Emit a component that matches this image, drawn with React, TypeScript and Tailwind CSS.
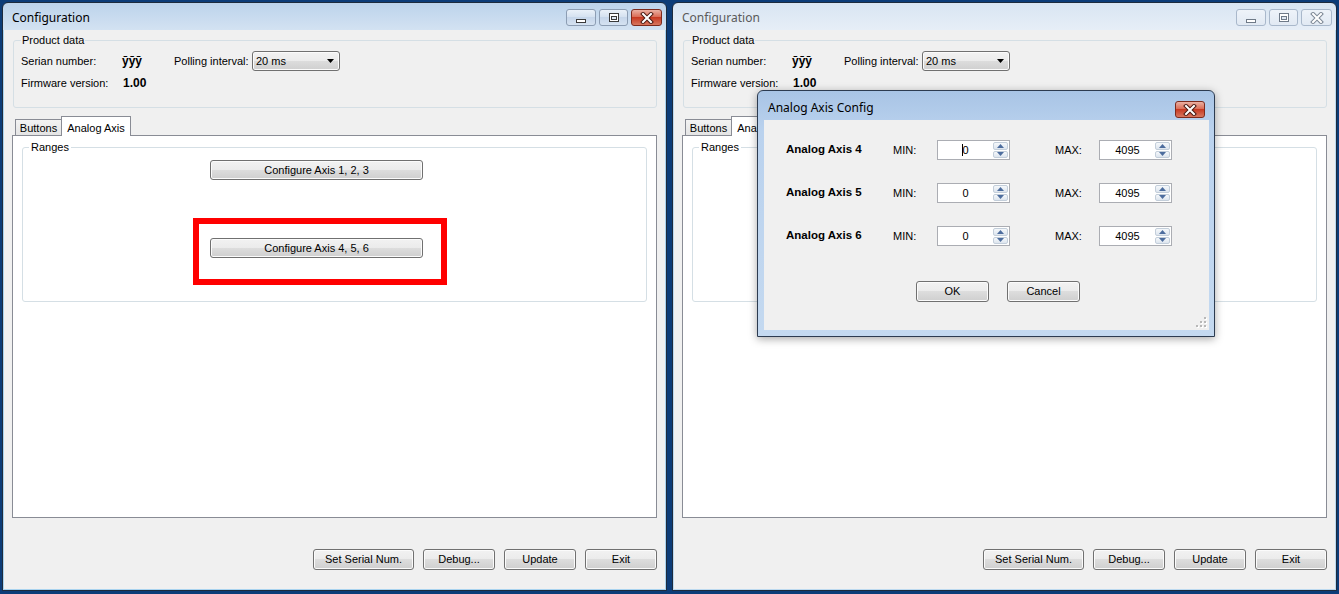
import React from 'react';

const sans = "font-['Liberation_Sans',Arial,sans-serif]";
const btnBg =
  'bg-[linear-gradient(to_bottom,#f2f2f2_0%,#ebebeb_50%,#dddddd_50%,#cfcfcf_100%)] shadow-[inset_0_0_0_1px_#fbfbfb]';

function WinButton({ label, className }: { label: string; className: string }) {
  return (
    <button
      className={`flex shrink-0 items-center justify-center rounded-[3px] border border-[#707070] text-[11px] leading-none text-black ${btnBg} ${className}`}
    >
      {label}
    </button>
  );
}

function CaptionButton({ kind, active, width }: { kind: 'min' | 'max' | 'close'; active: boolean; width: string }) {
  const stroke = active ? '#3a3a3a' : '#6f7a88';
  let bg = 'border-[#8c9db3] bg-[linear-gradient(to_bottom,#eaf1f9,#d3e0ef_50%,#c6d6ea_50%,#d5e2f1)]';
  if (!active) bg = 'border-[#a9b8cb] bg-[linear-gradient(to_bottom,#eef3f9,#e1e9f3)]';
  if (kind === 'close' && active)
    bg = 'border-[#7d2a1c] bg-[linear-gradient(to_bottom,#eab0a2,#d9664f_50%,#c73a22_50%,#d8775f)]';
  return (
    <div className={`flex h-[17px] items-center justify-center rounded-[3px] border ${bg} ${width}`}>
      {kind === 'min' && (
        <svg width="12" height="12" viewBox="0 0 12 12">
          <rect x="1.5" y="7.5" width="9" height="3" fill="#fff" stroke={stroke} />
        </svg>
      )}
      {kind === 'max' && (
        <svg width="12" height="12" viewBox="0 0 12 12">
          <rect x="1.5" y="1.5" width="9" height="8" fill="#fff" stroke={stroke} />
          <rect x="3.5" y="4.5" width="5" height="3" fill="#dfe8f3" stroke={stroke} />
        </svg>
      )}
      {kind === 'close' && (
        <svg width="14" height="12" viewBox="0 0 14 12">
          <path d="M3 2l8 8M11 2l-8 8" stroke={active ? '#4a1a12' : '#7d8896'} strokeWidth="4" strokeLinecap="square" />
          <path d="M3 2l8 8M11 2l-8 8" stroke="#fff" strokeWidth="2" strokeLinecap="square" />
        </svg>
      )}
    </div>
  );
}

function ComboBox() {
  return (
    <div
      className={`flex h-[20px] w-[88px] items-center justify-between rounded-[3px] border border-[#707070] pl-[3px] pr-[5px] text-[11px] ${btnBg}`}
    >
      <span>20 ms</span>
      <svg width="7" height="4" viewBox="0 0 7 4">
        <path d="M0 0h7L3.5 4z" fill="#000" />
      </svg>
    </div>
  );
}

function SpinArrow({ up }: { up?: boolean }) {
  return (
    <div className="flex flex-1 items-center justify-center rounded-[2px] border border-[#c3ceda] bg-[linear-gradient(to_bottom,#f5f8fb,#dde5ee)]">
      <svg width="7" height="4" viewBox="0 0 7 4">
        <path d={up ? 'M0 4h7L3.5 0z' : 'M0 0h7L3.5 4z'} fill="#4d6d9e" />
      </svg>
    </div>
  );
}

function SpinBox({ value, caret }: { value: string; caret?: boolean }) {
  return (
    <div className="flex h-[20px] w-[73px] shrink-0 border border-[#abadb3] bg-white">
      <div className="flex flex-1 items-center justify-center text-[11px]">
        {caret && <span className="mr-[-1px] h-[12px] w-px bg-black" />}
        <span>{value}</span>
      </div>
      <div className="flex w-[16px] flex-col gap-px py-px pr-px">
        <SpinArrow up />
        <SpinArrow />
      </div>
    </div>
  );
}

function AxisRow({ n, caret }: { n: number; caret?: boolean }) {
  return (
    <div className="flex h-[20px] items-center pl-[22px] text-[11px]">
      <span className="w-[107px] text-[11.5px] font-bold">Analog Axis {n}</span>
      <span className="w-[44px]">MIN:</span>
      <SpinBox value="0" caret={caret} />
      <span className="ml-[45px] w-[44px]">MAX:</span>
      <SpinBox value="4095" />
    </div>
  );
}

function AxisDialog() {
  return (
    <div
      className={`absolute left-[84px] top-[87px] z-20 flex h-[247px] w-[458px] flex-col rounded-t-[6px] border border-[#2c3b50] bg-[linear-gradient(to_bottom,#a8c4e5,#bad2ee_40px,#c4d9f0)] pb-[6px] pl-[6px] pr-[5px] shadow-[0_2px_8px_rgba(0,0,0,0.35)] ${sans}`}
    >
      <div className="flex h-[29px] shrink-0 items-start justify-between">
        <span className="pl-[4px] pt-[9px] font-['Noto_Sans',sans-serif] text-[12px] leading-[16px] text-black">
          Analog Axis Config
        </span>
        <div className="mr-[4px] mt-[10px]">
          <CaptionButton kind="close" active width="w-[30px]" />
        </div>
      </div>
      <div className="relative flex flex-1 flex-col bg-[#f0f0f0] pt-[20px] text-black">
        <div className="flex flex-col gap-[23px]">
          <AxisRow n={4} caret />
          <AxisRow n={5} />
          <AxisRow n={6} />
        </div>
        <div className="mt-[35px] flex gap-[18px] pl-[152px]">
          <WinButton label="OK" className="h-[21px] w-[73px]" />
          <WinButton label="Cancel" className="h-[21px] w-[73px]" />
        </div>
        <svg className="absolute bottom-[2px] right-[2px]" width="11" height="11" viewBox="0 0 11 11">
          {[
            [8, 0],
            [8, 4],
            [4, 4],
            [8, 8],
            [4, 8],
            [0, 8],
          ].map(([x, y]) => (
            <g key={`${x}-${y}`}>
              <rect x={x + 1} y={y + 1} width="2" height="2" fill="#fff" />
              <rect x={x} y={y} width="2" height="2" fill="#b8b8b8" />
            </g>
          ))}
        </svg>
      </div>
    </div>
  );
}

function ConfigWindow({ active, highlight, children }: { active: boolean; highlight?: boolean; children?: React.ReactNode }) {
  const frame = active
    ? 'bg-[linear-gradient(to_bottom,#bcd3eb,#d3e2f2_27px,#a9d3ef_27px,#a9d3ef)]'
    : 'bg-[linear-gradient(to_bottom,#d9e5f2,#e6eef7_27px,#bcd9ef_27px,#bcd9ef)]';
  return (
    <div
      className={`relative flex h-[589px] w-[665px] shrink-0 flex-col rounded-t-[6px] border border-[#1d2b3d] px-px pb-px ${frame} ${sans}`}
    >
      <div className="flex h-[27px] shrink-0 items-start justify-between">
        <span
          className={`pl-[8px] pt-[7px] font-['Noto_Sans',sans-serif] text-[12px] leading-[16px] ${active ? 'text-black' : 'text-[#5a5a5a]'}`}
        >
          Configuration
        </span>
        <div className="mr-[3px] mt-[6px] flex gap-[3px]">
          <CaptionButton kind="min" active={active} width="w-[30px]" />
          <CaptionButton kind="max" active={active} width="w-[29px]" />
          <CaptionButton kind="close" active={active} width="w-[31px]" />
        </div>
      </div>

      <div className="flex flex-1 flex-col bg-[#f0f0f0] text-[11px] text-black">
        <fieldset className="ml-[9px] mr-[8px] mt-[4px] h-[74px] rounded-[3px] border border-[#d5dfe5]">
          <legend className="ml-[7px] px-[1px] text-[11px] leading-[13px]">Product data</legend>
          <div className="flex flex-col pl-[7px] pt-[4px]">
            <div className="flex h-[20px] items-center">
              <span className="w-[101px]">Serian number:</span>
              <span className="w-[52px] text-[12px] font-bold">ȳȳȳ</span>
              <span className="w-[78px]">Polling interval:</span>
              <ComboBox />
            </div>
            <div className="mt-[5px] flex h-[14px] items-center">
              <span className="w-[102px]">Firmware version:</span>
              <span className="text-[12px] font-bold">1.00</span>
            </div>
          </div>
        </fieldset>

        <div className="ml-[11px] mt-[8px] flex h-[19px] items-end">
          <div className="flex h-[16px] w-[47px] items-center justify-center border border-b-0 border-[#898c95] bg-[linear-gradient(to_bottom,#f3f3f3,#e4e4e4)] pt-px">
            Buttons
          </div>
          <div className="relative z-10 -mb-px -ml-px flex h-[20px] w-[70px] items-start justify-center border border-b-0 border-[#898c95] bg-white pt-[3px]">
            Analog Axis
          </div>
        </div>
        <div className="relative ml-[8px] mr-[8px] h-[383px] border border-[#898c95] bg-white">
          <fieldset className="ml-[9px] mr-[9px] mt-[5px] h-[161px] rounded-[3px] border border-[#d5dfe5]">
            <legend className="ml-[6px] px-[2px] text-[11px] leading-[13px]">Ranges</legend>
            <div className="flex flex-col pl-[187px] pt-[6px]">
              <WinButton label="Configure Axis 1, 2, 3" className="h-[20px] w-[213px]" />
              <WinButton label="Configure Axis 4, 5, 6" className="mt-[58px] h-[20px] w-[213px]" />
            </div>
          </fieldset>
          {highlight && (
            <div className="absolute left-[180px] top-[82px] h-[67px] w-[254px] border-[6px] border-[#ff0000]" />
          )}
        </div>

        <div className="mr-[8px] mt-[31px] flex justify-end gap-[9px]">
          <WinButton label="Set Serial Num." className="h-[21px] w-[101px]" />
          <WinButton label="Debug..." className="h-[21px] w-[72px]" />
          <WinButton label="Update" className="h-[21px] w-[72px]" />
          <WinButton label="Exit" className="h-[21px] w-[72px]" />
        </div>
      </div>
      {children}
    </div>
  );
}

export default function App() {
  return (
    <div className="flex h-[594px] w-[1339px] gap-[5px] overflow-hidden bg-[#0c3c78] pl-[2px] pt-[2px]">
      <ConfigWindow active highlight />
      <ConfigWindow active={false}>
        <AxisDialog />
      </ConfigWindow>
    </div>
  );
}
